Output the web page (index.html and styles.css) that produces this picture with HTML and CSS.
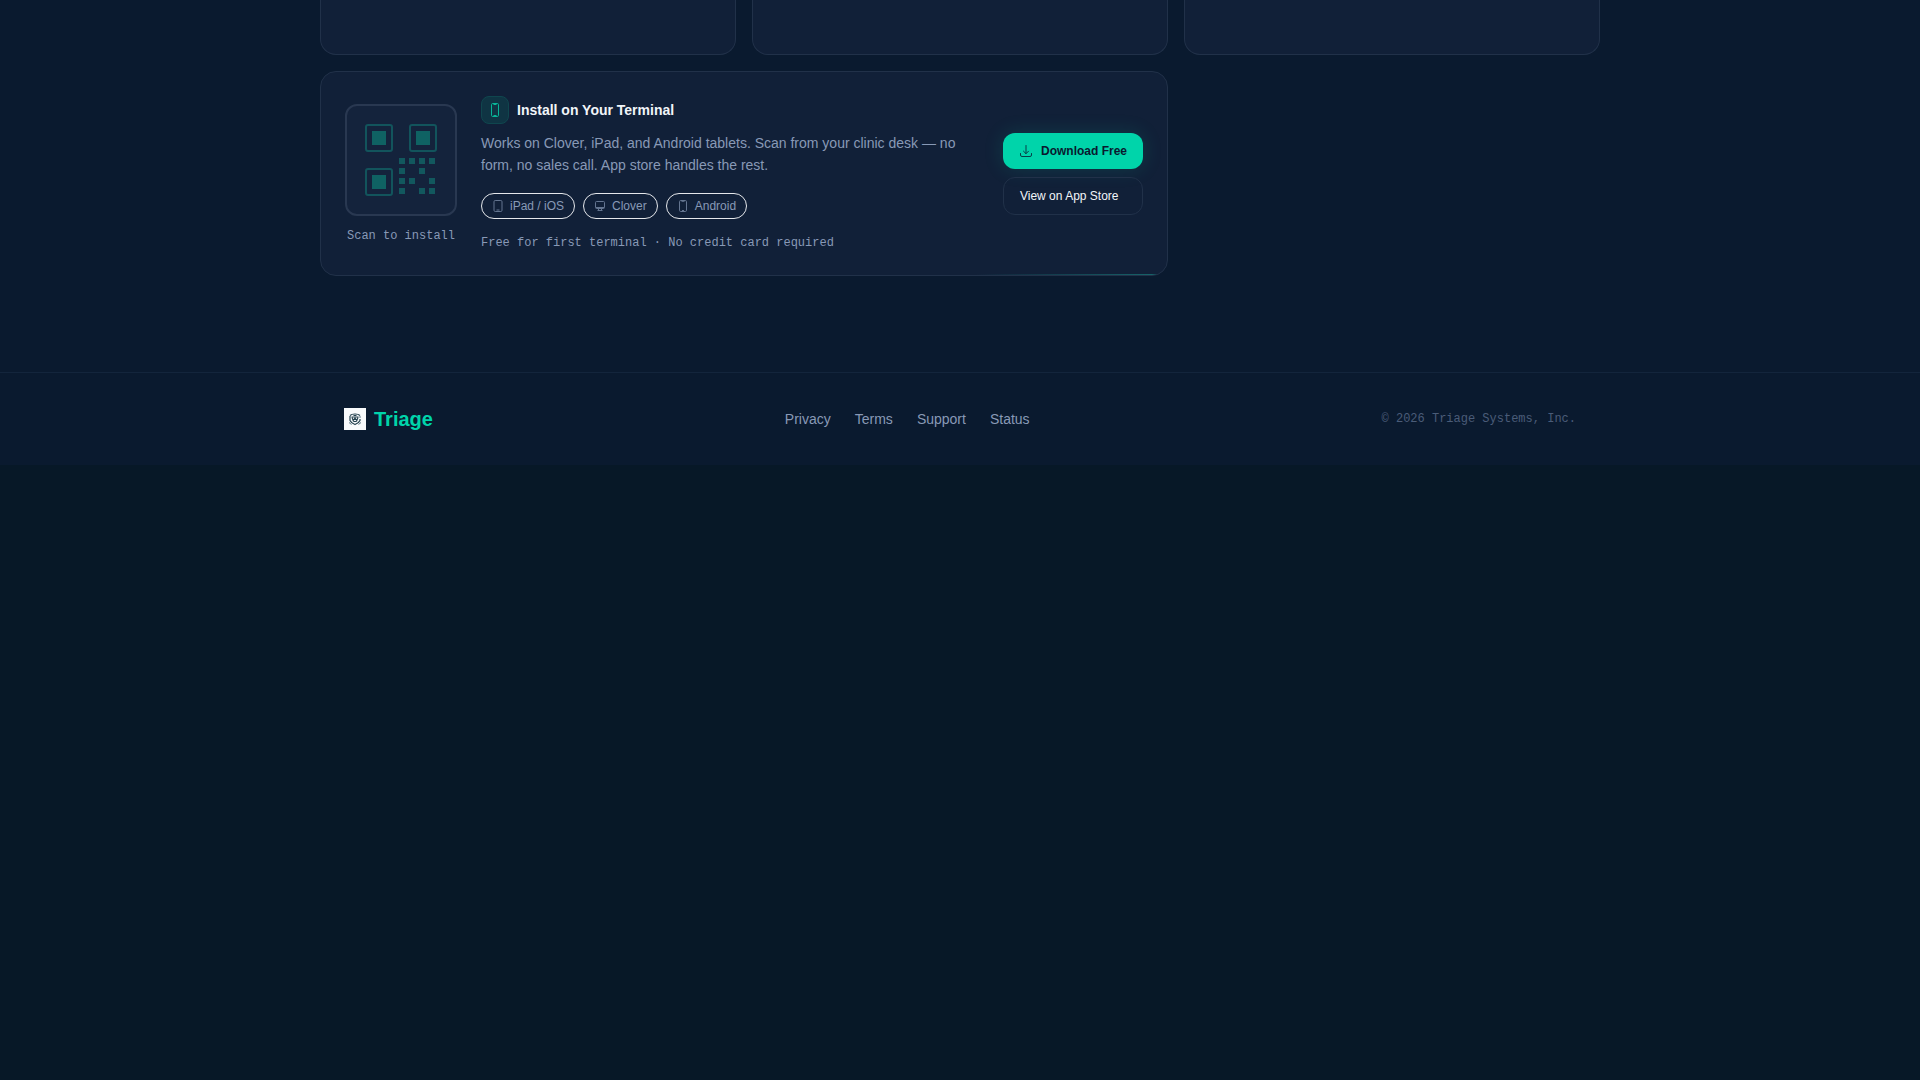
FILE: index.html
```html
<!DOCTYPE html>
<html lang="en">
<head>
<meta charset="utf-8">
<meta name="viewport" content="width=device-width, initial-scale=1">
<title>Triage</title>
<link rel="stylesheet" href="styles.css">
</head>
<body>
<main class="features">
  <div class="grid">
    <article class="card card-plain"></article>
    <article class="card card-plain"></article>
    <article class="card card-plain"></article>
    <article class="card install">
      <div class="scan">
        <div class="qr">
          <svg viewBox="0 0 80 80" width="80" height="80" aria-hidden="true">
            <g fill="none" stroke="#12545c" stroke-width="2">
              <rect x="5" y="5" width="26" height="26" rx="2"/>
              <rect x="49" y="5" width="26" height="26" rx="2"/>
              <rect x="5" y="49" width="26" height="26" rx="2"/>
            </g>
            <g fill="#0f6263">
              <rect x="11" y="11" width="14" height="14"/>
              <rect x="55" y="11" width="14" height="14"/>
              <rect x="11" y="55" width="14" height="14"/>
            </g>
            <path fill="#12585e" d="M38 38h6v6h-6zM48 38h6v6h-6zM58 38h6v6h-6zM68 38h6v6h-6zM38 48h6v6h-6zM58 48h6v6h-6zM38 58h6v6h-6zM48 58h6v6h-6zM68 58h6v6h-6zM38 68h6v6h-6zM58 68h6v6h-6zM68 68h6v6h-6z"/>
          </svg>
        </div>
        <span class="mono">Scan to install</span>
      </div>
      <div class="info">
        <div class="heading">
          <span class="badge">
            <svg viewBox="0 0 14 14" width="14" height="14" fill="none" stroke="currentColor" aria-hidden="true"><rect x="3.5" y=".5" width="7" height="13" rx="1.2"/><path d="M5.5 1.5h3M5.5 12.5h3"/></svg>
          </span>
          <h2>Install on Your Terminal</h2>
        </div>
        <p class="desc">Works on Clover, iPad, and Android tablets. Scan from your clinic desk — no form, no sales call. App store handles the rest.</p>
        <ul class="pills">
          <li><svg viewBox="0 0 12 12" width="12" height="12" fill="none" stroke="currentColor" aria-hidden="true"><rect x="2" y=".5" width="8" height="11" rx="1.2"/><path d="M4.5 10h3"/></svg>iPad / iOS</li>
          <li><svg viewBox="0 0 12 12" width="12" height="12" fill="none" stroke="currentColor" aria-hidden="true"><rect x="1.5" y="1.5" width="9" height="7" rx="1"/><path d="M2 7.5h8M4.5 8.5v2M7.5 8.5v2M3.5 10.500h5"/></svg>Clover</li>
          <li><svg viewBox="0 0 12 12" width="12" height="12" fill="none" stroke="currentColor" aria-hidden="true"><rect x="2.5" y=".5" width="7" height="11" rx="1.2"/><path d="M4.500 1.300h3M5 10.500h2"/></svg>Android</li>
        </ul>
        <p class="mono">Free for first terminal · No credit card required</p>
      </div>
      <div class="actions">
        <button class="btn btn-primary" type="button">
          <svg viewBox="0 0 14 14" width="14" height="14" fill="none" stroke="currentColor" stroke-linecap="round" stroke-linejoin="round" aria-hidden="true"><path d="M7 1.500v8M4.500 7.200 7 9.700l2.500-2.500M1.500 9.500v1.500a1.500 1.500 0 0 0 1.500 1.500h8a1.500 1.500 0 0 0 1.500-1.500v-1.500"/></svg>
          Download Free
        </button>
        <button class="btn btn-outline" type="button">View on App Store</button>
      </div>
    </article>
  </div>
</main>
<footer class="footer">
  <div class="footer-inner">
    <a class="brand" href="#">
      <svg viewBox="0 0 22 22" width="22" height="22" aria-hidden="true">
        <path fill="#f8fafc" d="M0 0h22v22H0z"/>
        <g fill="none" stroke="#24414f">
          <path d="M6 7.500C8 5.500 14 5.500 16 7.500M6 8v4.500c.8 2 3 3.200 5 4 2-.8 4.200-2 5-4V11" stroke-width="1.200"/>
          <path d="M7.500 9h7M8 9.500l1.200 3L11 10l1.800 2.500 1.200-3M8.500 11.500h5M9.500 13.500h3M9.500 7.500h3" stroke-width="1.100"/>
          <path d="M5 14.500l2.500 2M17 14.500l-2.500 2M16 8v2" stroke="#5c7783"/>
        </g>
      </svg>
      <span>Triage</span>
    </a>
    <nav class="links" aria-label="Footer">
      <a href="#">Privacy</a>
      <a href="#">Terms</a>
      <a href="#">Support</a>
      <a href="#">Status</a>
    </nav>
    <p class="copyright">© 2026 Triage Systems, Inc.</p>
  </div>
</footer>
</body>
</html>
```
FILE: styles.css
```css
* {
  box-sizing: border-box;
  margin: 0;
  padding: 0;
}

body {
  background: #071827;
  color: #f1f5f9;
  font-family: "Liberation Sans", Arial, sans-serif;
  font-size: 14px;
}

svg {
  display: block;
  flex: none;
}

.features {
  background: #0a1a2f;
  padding-bottom: 96px;
}

.grid {
  display: grid;
  grid-template-columns: repeat(3, 1fr);
  gap: 16px;
  max-width: 1280px;
  margin: 0 auto;
}

.card {
  background: #112038;
  border: 1px solid #213149;
  border-radius: 16px;
}

.card-plain {
  height: 55px;
  border-top: 0;
  border-radius: 0 0 16px 16px;
}

.install {
  position: relative;
  grid-column: span 2;
  display: flex;
  align-items: center;
  gap: 24px;
  padding: 24px;
  overflow: hidden;
}

.install::after {
  content: "";
  position: absolute;
  right: 0;
  bottom: 0;
  width: 192px;
  height: 1px;
  background: linear-gradient(to right, transparent, #17686c);
}

.scan {
  display: flex;
  flex-direction: column;
  align-items: center;
  gap: 12px;
}

.qr {
  display: grid;
  place-items: center;
  width: 112px;
  height: 112px;
  border: 2px solid #293851;
  border-radius: 12px;
  background: #14233c;
}

.mono {
  color: #8899b6;
  font-family: "Liberation Mono", "Courier New", monospace;
  font-size: 12px;
  line-height: 16px;
}

.info {
  flex: 1;
}

.heading {
  display: flex;
  align-items: center;
  gap: 8px;
  margin-bottom: 8px;
}

.badge {
  display: grid;
  place-items: center;
  width: 28px;
  height: 28px;
  border: 1px solid #0f464e;
  border-radius: 8px;
  background: #0f3443;
  color: #08b498;
}

h2 {
  font-size: 14px;
  line-height: 20px;
}

.desc {
  margin-bottom: 17px;
  color: #8899b6;
  line-height: 22px;
}

.pills {
  display: flex;
  gap: 8px;
  margin-bottom: 16px;
  list-style: none;
}

.pills li {
  display: flex;
  align-items: center;
  gap: 6px;
  padding: 4px 10px;
  border: 1px solid #e5e7eb;
  border-radius: 16px;
  color: #8899b6;
  font-size: 12px;
  line-height: 16px;
}

.pills svg {
  opacity: .7;
}

.actions {
  display: flex;
  flex-direction: column;
  gap: 8px;
}

.btn {
  display: flex;
  align-items: center;
  gap: 8px;
  padding: 10px 16px;
  border: 0;
  border-radius: 12px;
  font: 12px/16px "Liberation Sans", Arial, sans-serif;
  cursor: pointer;
}

.btn-primary {
  background: #00d4aa;
  color: #0a192f;
  font-weight: 700;
  box-shadow: 0 0 20px rgba(0, 212, 170, .15);
}

.btn-primary svg {
  opacity: .8;
}

.btn-outline {
  border: 1px solid #213149;
  background: transparent;
  color: #f1f5f9;
}

.footer {
  border-top: 1px solid #13253c;
  background: #0a1a2f;
}

.footer-inner {
  display: flex;
  flex-wrap: wrap;
  gap: 24px;
  align-items: center;
  justify-content: space-between;
  max-width: 1280px;
  margin: 0 auto;
  padding: 32px 24px;
}

.brand {
  display: flex;
  align-items: center;
  gap: 8px;
  color: #00d4aa;
  font-size: 20px;
  font-weight: 700;
  line-height: 28px;
  text-decoration: none;
}

.links {
  display: flex;
  gap: 24px;
}

.links a {
  color: #8899b6;
  line-height: 20px;
  text-decoration: none;
}

.copyright {
  color: #4a5c78;
  font-family: "Liberation Mono", "Courier New", monospace;
  font-size: 12px;
  line-height: 16px;
}
```
